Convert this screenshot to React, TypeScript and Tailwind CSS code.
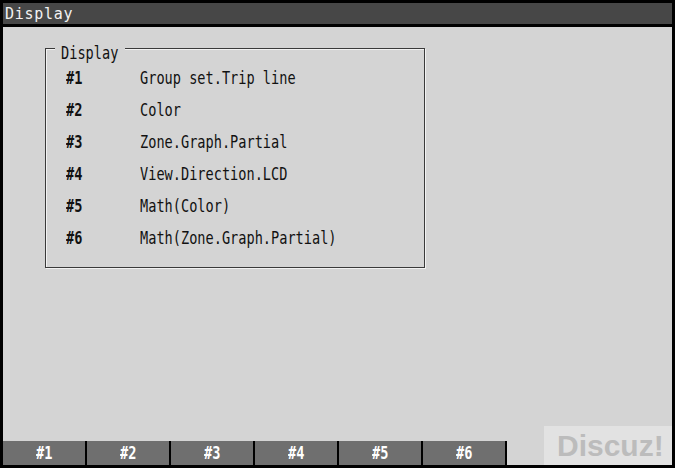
import React from 'react';

const menuItems = [
  { key: '#1', label: 'Group set.Trip line' },
  { key: '#2', label: 'Color' },
  { key: '#3', label: 'Zone.Graph.Partial' },
  { key: '#4', label: 'View.Direction.LCD' },
  { key: '#5', label: 'Math(Color)' },
  { key: '#6', label: 'Math(Zone.Graph.Partial)' },
];

const softKeys = ['#1', '#2', '#3', '#4', '#5', '#6'];

const mono = "font-['DejaVu_Sans_Mono','Liberation_Mono',monospace]";

// the recorder's LCD font is tall and narrow, so squeeze a mono face horizontally
const narrow = 'inline-block scale-x-[0.8] whitespace-pre';

const App: React.FC = () => {
  return (
    <div className="w-[678px] h-[470px] bg-white">
      <div className="relative w-[675px] h-[468px] border-[3px] border-black bg-[#d4d4d4] flex flex-col">
        {/* Title bar */}
        <div className={`h-[24px] shrink-0 bg-[#474747] border-b-[3px] border-black pl-[2px] pt-[1px] ${mono} text-[15px] leading-[20px] tracking-[0.7px] text-[#f2f2f2]`}>
          Display
        </div>

        {/* Settings group */}
        <div className="flex-1 pl-[42px] pt-[21px]">
          <div className="relative w-[380px] h-[220px] border border-[#3a3a3a] shadow-[1px_1px_0_#f2f2f2,inset_1px_1px_0_#f2f2f2]">
            <span className={`absolute left-[9px] top-[-4px] w-[70px] pl-[6px] bg-[#d4d4d4] ${mono} text-[17px] leading-[16px] text-[#111]`}>
              <span className={`${narrow} origin-left`}>Display</span>
            </span>
            <div className="pt-[13px] pl-[20px]">
              {menuItems.map((item) => (
                <div key={item.key} className={`flex ${mono} text-[17px] leading-[32px] text-[#111]`}>
                  <span className="w-[74px] font-bold">
                    <span className={`${narrow} origin-left`}>{item.key}</span>
                  </span>
                  <span className={`${narrow} origin-left`}>{item.label}</span>
                </div>
              ))}
            </div>
          </div>
        </div>

        {/* Soft keys */}
        <div className="h-[24px] shrink-0 flex">
          {softKeys.map((k) => (
            <div
              key={k}
              className={`w-[84px] h-full bg-[#6f6f6f] border-r-2 border-black flex justify-center ${mono} font-bold text-[17px] leading-[24px] text-white`}
            >
              <span className={`${narrow} origin-center`}>{k}</span>
            </div>
          ))}
        </div>

        {/* Forum watermark */}
        <div className="absolute right-0 bottom-0 w-[128px] h-[39px] bg-[#e2e2e2] pl-[13px] font-['Liberation_Sans',Arial,sans-serif] font-bold text-[30px] leading-[39px] text-[#bcbcbc]">
          Discuz!
        </div>
      </div>
    </div>
  );
};

export default App;
